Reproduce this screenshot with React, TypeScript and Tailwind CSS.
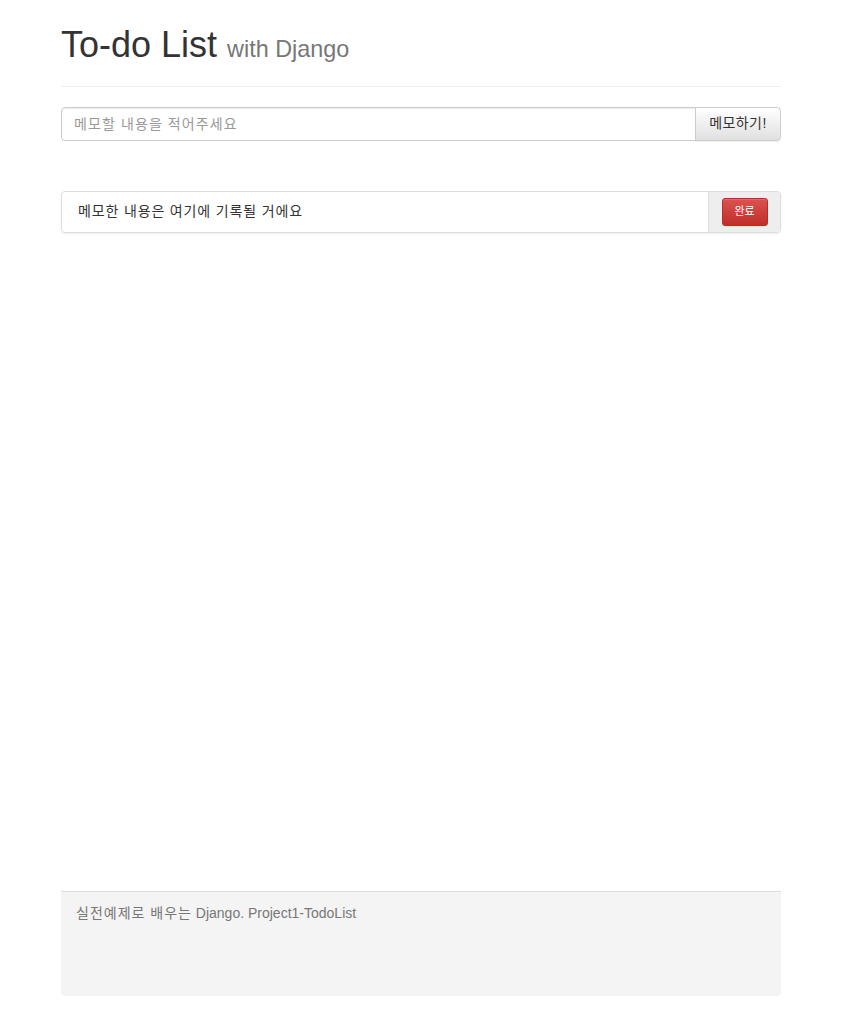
import React from "react";

const font = { fontFamily: '"Liberation Sans", "Noto Sans CJK KR", Arial, sans-serif' };

export default function App() {
  return (
    <div className="min-h-[1009px] bg-white text-[14px] text-[#333]" style={font}>
      <div className="ml-[61px] flex w-[720px] flex-col">
        {/* header */}
        <div className="border-b border-[#eee] pt-[25px] pb-[9px]">
          <h1 className="mb-[7px] text-[36px] leading-[39.6px] font-normal text-[#333]">
            To-do List <small className="text-[23.4px] text-[#777]">with Django</small>
          </h1>
        </div>

        {/* memo input */}
        <div className="mt-[20px] flex h-[34px]">
          <input
            placeholder="메모할 내용을 적어주세요"
            className="h-[34px] flex-1 rounded-l-[4px] border border-[#ccc] px-[12px] text-[14px] tracking-[1.1px] text-[#555] placeholder:text-[#999] shadow-[inset_0_1px_1px_rgba(0,0,0,0.075)] outline-none"
          />
          <button className="h-[34px] w-[86px] -ml-px rounded-r-[4px] border border-[#ccc] bg-[linear-gradient(to_bottom,#fff_0%,#e0e0e0_100%)] text-[14px] tracking-[0.4px] text-[#333] shadow-[inset_0_1px_0_rgba(255,255,255,0.15),0_1px_1px_rgba(0,0,0,0.075)]">
            메모하기!
          </button>
        </div>

        {/* todo item */}
        <div className="mt-[50px] flex h-[42px] rounded-[4px] border border-[#ddd] shadow-[0_1px_2px_rgba(0,0,0,0.075)]">
          <div className="flex flex-1 items-center rounded-l-[4px] bg-white pl-[16px] text-[14px] tracking-[0.85px] text-[#333]">
            메모한 내용은 여기에 기록될 거에요
          </div>
          <div className="flex w-[72px] items-center justify-center rounded-r-[4px] border-l border-[#ddd] bg-[#eee]">
            <button className="h-[28px] w-[46px] rounded-[3px] border border-[#b92c28] bg-[linear-gradient(to_bottom,#d9534f_0%,#c12e2a_100%)] text-[11px] text-white shadow-[inset_0_1px_0_rgba(255,255,255,0.15),0_1px_1px_rgba(0,0,0,0.075)]">
              완료
            </button>
          </div>
        </div>

        {/* footer */}
        <div className="mt-[658px] h-[105px] rounded-b-[4px] border-t border-[#ddd] bg-[#f4f4f4] px-[15px] pt-[11px] text-[14px] text-[#777]">
          <span className="tracking-[1px]">실전예제로 배우는</span> Django. Project1-TodoList
        </div>
      </div>
    </div>
  );
}
